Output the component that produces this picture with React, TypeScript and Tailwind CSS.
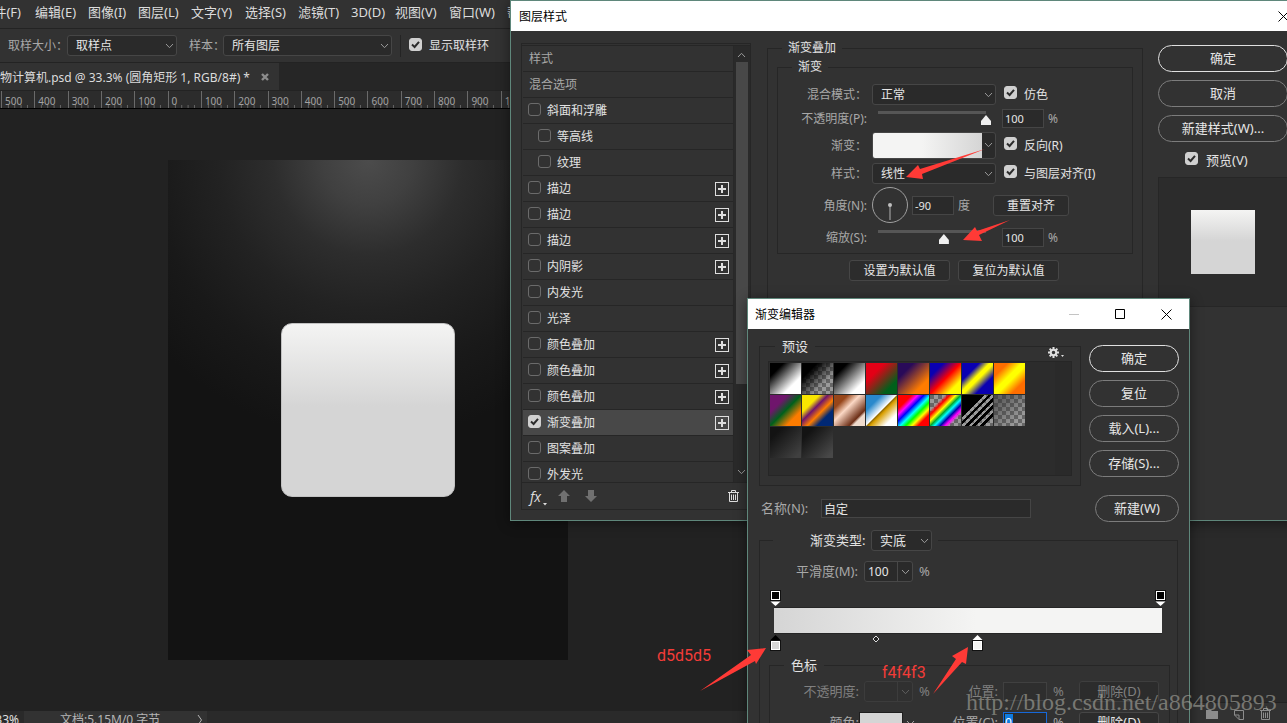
import React, { useId } from "react";

const rulerLabels = ["500", "400", "300", "200", "100", "0", "100", "200", "300", "400", "500", "600", "700", "800", "900", "1000"];

const menuItems: [string, string][] = [
  ["编辑(E)", "w-[53px]"],
  ["图像(I)", "w-[50px]"],
  ["图层(L)", "w-[53px]"],
  ["文字(Y)", "w-[54px]"],
  ["选择(S)", "w-[53px]"],
  ["滤镜(T)", "w-[53px]"],
  ["3D(D)", "w-[44px]"],
  ["视图(V)", "w-[54px]"],
  ["窗口(W)", "w-[58px]"],
  ["帮助(H)", "w-[53px]"],
];

type Effect = { name: string; on?: boolean; sub?: boolean; plus?: boolean };

const effects: Effect[] = [
  { name: "斜面和浮雕" },
  { name: "等高线", sub: true },
  { name: "纹理", sub: true },
  { name: "描边", plus: true },
  { name: "描边", plus: true },
  { name: "描边", plus: true },
  { name: "内阴影", plus: true },
  { name: "内发光" },
  { name: "光泽" },
  { name: "颜色叠加", plus: true },
  { name: "颜色叠加", plus: true },
  { name: "颜色叠加", plus: true },
  { name: "渐变叠加", on: true, plus: true },
  { name: "图案叠加" },
  { name: "外发光" },
];

const presets: [string, string][] = [
  ["前景到背景", "bg-[linear-gradient(135deg,#000_22%,#fff_72%)]"],
  ["前景到透明", "bg-[linear-gradient(135deg,#000_25%,transparent_70%)]"],
  ["黑白", "bg-[linear-gradient(135deg,#000_22%,#fff_78%)]"],
  ["红绿", "bg-[linear-gradient(135deg,#e30016_30%,#00601b_78%)]"],
  ["紫橙", "bg-[linear-gradient(135deg,#290a59_25%,#ff7c00_75%)]"],
  ["蓝红黄", "bg-[linear-gradient(135deg,#0a00b2_22%,#ff0000_50%,#fffc00_78%)]"],
  ["蓝黄蓝", "bg-[linear-gradient(135deg,#0a00b2_28%,#fffc00_45%,#fffc00_52%,#0a00b2_72%)]"],
  ["橙黄橙", "bg-[linear-gradient(135deg,#ff6e00_22%,#ffff00_45%,#ffff00_55%,#ff6e00_78%)]"],
  ["紫绿橙", "bg-[linear-gradient(135deg,#6f156c_28%,#00601b_50%,#fd7c00_76%)]"],
  ["黄紫橙蓝", "bg-[linear-gradient(135deg,#f9e600_28%,#6f156c_42%,#fd7c00_58%,#002874_74%)]"],
  ["铜色", "bg-[linear-gradient(135deg,#97461a_22%,#fbd8c5_42%,#6c2e16_74%,#efdbcd_80%)]"],
  ["铬黄", "bg-[linear-gradient(135deg,#2989cc_25%,#fff_49%,#906a00_51%,#d99f00_56%,#fff_80%)]"],
  ["色谱", "bg-[linear-gradient(135deg,#f00_22%,#f0f_32%,#00f_42%,#0ff_53%,#0f0_62%,#ff0_72%,#f00_82%)]"],
  ["透明彩虹", "bg-[linear-gradient(135deg,transparent_24%,#f00_32%,#ff0_42%,#0a3_50%,#0ff_57%,#00a_66%,#f0f_74%,transparent_82%)]"],
  ["透明条纹", "bg-[linear-gradient(135deg,#000_36%,transparent_36%,transparent_42%,#000_42%,#000_48%,transparent_48%,transparent_54%,#000_54%,#000_60%,transparent_60%,transparent_66%,#000_66%,#000_72%,transparent_72%,transparent_78%,#000_78%,#000_84%,transparent_84%)]"],
  ["中灰密度", "bg-[linear-gradient(135deg,#3338_20%,transparent_80%)]"],
  ["深灰一", "bg-[linear-gradient(135deg,#131313_20%,#404040_90%)]"],
  ["深灰二", "bg-[linear-gradient(135deg,#131313_20%,#484848_90%)]"],
];

function Chevron({ className = "", up = false }: { className?: string; up?: boolean }) {
  return (
    <svg width="9" height="6" viewBox="0 0 9 6" className={className} fill="none" stroke="currentColor" strokeWidth="1" aria-hidden="true">
      {up ? <path d="M1 5 4.5 1.3 8 5" /> : <path d="M1 1 4.5 4.7 8 1" />}
    </svg>
  );
}

function Check({ label, on = false, textClass = "", gap = "gap-[7px]" }: { label: string; on?: boolean; textClass?: string; gap?: string }) {
  return (
    <label className={`flex items-center whitespace-nowrap ${gap}`}>
      <span className="relative -mt-[3px] block size-[13px] shrink-0">
        <input type="checkbox" defaultChecked={on} className="peer block size-[13px] appearance-none rounded-[3px] border border-[#6b6b6b] checked:border-[#d0d0d0] checked:bg-[#d0d0d0]" />
        <svg viewBox="0 0 13 13" className="pointer-events-none absolute inset-0 hidden peer-checked:block" fill="none" stroke="#2b2b2b" strokeWidth="2" aria-hidden="true">
          <path d="M3 6.5 5.6 9 10 3.8" />
        </svg>
      </span>
      <span className={textClass}>{label}</span>
    </label>
  );
}

function Select({ id, value, width, label, pad = "pl-[8px]" }: { id?: string; value: string; width: string; label?: string; pad?: string }) {
  return (
    <span className={`relative block h-[21px] shrink-0 ${width}`}>
      <select id={id} aria-label={label} className={`block h-full w-full appearance-none rounded-[3px] border border-[#464646] bg-[#2a2a2a] text-[#e6e6e6] outline-none ${pad}`}>
        <option>{value}</option>
      </select>
      <Chevron className="pointer-events-none absolute top-[8px] right-[3px] text-[#9a9a9a]" />
    </span>
  );
}

function Combo({ id, value, dim = false }: { id: string; value: string; dim?: boolean }) {
  return (
    <span className={`flex h-[21px] w-[49px] shrink-0 items-center rounded-[3px] border ${dim ? "border-[#3c3c3c] bg-[#303030]" : "border-[#484848] bg-[#2a2a2a]"}`}>
      <input id={id} defaultValue={value} disabled={dim} className="h-full w-[32px] bg-transparent pl-[3px] text-[12px] text-[#e6e6e6] outline-none" />
      <button aria-label="展开" className={`flex h-full flex-1 items-center justify-center border-l ${dim ? "border-[#3c3c3c] text-[#5e5e5e]" : "border-[#484848] text-[#a0a0a0]"}`}>
        <Chevron />
      </button>
    </span>
  );
}

function Field({ id, value, width = "w-[42px]" }: { id: string; value: string; width?: string }) {
  return <input id={id} defaultValue={value} className={`h-[19px] shrink-0 border border-[#454545] bg-[#2a2a2a] pl-[2px] text-[11px] text-[#e6e6e6] outline-none ${width}`} />;
}

function Pill({ children, primary = false, width }: { children: React.ReactNode; primary?: boolean; width: string }) {
  return (
    <button className={`flex h-[27px] items-center justify-center rounded-full text-[13px] text-[#e6e6e6] ${width} ${primary ? "border border-[#e0e0e0]" : "border border-[#7c7c7c]"}`}>
      {children}
    </button>
  );
}

function SmallButton({ children, width, dim = false }: { children: React.ReactNode; width: string; dim?: boolean }) {
  return (
    <button className={`flex h-[21px] shrink-0 items-center justify-center rounded-[3px] border bg-[#2c2c2c] ${width} ${dim ? "border-[#3e3e3e] text-[#808080]" : "border-[#464646] text-[#e6e6e6]"}`}>
      {children}
    </button>
  );
}

function Slider({ id, value }: { id: string; value: number }) {
  return (
    <input
      id={id}
      type="range"
      min={0}
      max={100}
      defaultValue={value}
      className="ml-px h-[14px] w-[118px] shrink-0 appearance-none bg-[linear-gradient(#565656,#565656)] bg-[length:108px_3px] bg-[position:5px_0] bg-no-repeat [&::-webkit-slider-thumb]:mt-[4px] [&::-webkit-slider-thumb]:size-[10px] [&::-webkit-slider-thumb]:appearance-none [&::-webkit-slider-thumb]:bg-[#f0f0f0] [&::-webkit-slider-thumb]:[clip-path:polygon(50%_0,100%_60%,100%_100%,0_100%,0_60%)]"
    />
  );
}

function Row({ label, htmlFor, height, children }: { label: string; htmlFor?: string; height: string; children: React.ReactNode }) {
  return (
    <div className={`flex items-center ${height}`}>
      <label htmlFor={htmlFor} className="mr-[5px] w-[89px] shrink-0 text-right text-[#a8a8a8]">
        {label}
      </label>
      {children}
    </div>
  );
}

function PlusIcon() {
  return (
    <svg width="14" height="14" viewBox="0 0 14 14" fill="none" stroke="#dedede" aria-hidden="true">
      <rect x="0.5" y="0.5" width="13" height="13" />
      <path d="M7 3v8M3 7h8" strokeWidth="2" />
    </svg>
  );
}

function TrashIcon({ className = "" }: { className?: string }) {
  return (
    <svg width="11" height="12" viewBox="0 0 11 12" fill="none" stroke="currentColor" className={className} aria-hidden="true">
      <path d="M0 2.5h11M3.5 2V.5h4V2M1.5 3v8.5h8V3M3.5 4.5v5.5M5.5 4.5v5.5M7.5 4.5v5.5" />
    </svg>
  );
}

function OpacityStop() {
  return (
    <svg width="11" height="17" viewBox="0 0 11 17" aria-hidden="true">
      <rect x="0.5" y="0.5" width="10" height="10" fill="#fff" stroke="#111" />
      <rect x="2" y="2" width="7" height="7" fill="#000" />
      <path d="M0.500 11.500h10L5.500 16z" fill="#fff" />
    </svg>
  );
}

function ColorStop({ color, active = false }: { color: string; active?: boolean }) {
  return (
    <svg width="11" height="17" viewBox="0 0 11 17" aria-hidden="true">
      <path d="M0.500 5h10L5.500 0z" fill={active ? "#000" : "#fff"} />
      <rect x="0.5" y="5.500" width="10" height="10" fill="#fff" stroke="#111" />
      <rect x="2" y="7" width="7" height="7" fill={color} />
    </svg>
  );
}

function Workspace() {
  return (
    <div className="flex h-full flex-col">
      <nav className="flex h-[29px] shrink-0 items-center border-b border-[#232323] pb-[3px] text-[13px] whitespace-nowrap text-[#dcdcdc]">
        <div className="flex w-[35px] shrink-0 justify-end pr-[14px]">
          <button className="shrink-0">文件(F)</button>
        </div>
        {menuItems.map(([name, width]) => (
          <button key={name} className={`shrink-0 text-left ${width}`}>
            {name}
          </button>
        ))}
      </nav>
      <div className="flex h-[34px] shrink-0 items-center border-b border-[#232323] pl-[8px] text-[12px] whitespace-nowrap">
        <label htmlFor="sample-size" className="w-[59px] text-[#a8a8a8]">取样大小：</label>
        <Select id="sample-size" value="取样点" width="w-[110px]" />
        <label htmlFor="sample" className="ml-[12px] w-[34px] text-[#a8a8a8]">样本：</label>
        <Select id="sample" value="所有图层" width="w-[169px]" />
        <span className="mx-[8px] h-[22px] border-l border-[#242424]" />
        <Check label="显示取样环" on textClass="text-[#e0e0e0]" />
      </div>
      <div className="flex h-[28px] shrink-0 border-b border-[#232323] bg-[#262626]">
        <div className="flex w-[279px] items-center gap-[6px] bg-[#323232] pt-px text-[12px] whitespace-nowrap text-[#dcdcdc]">
          <span className="w-[255px]">物计算机.psd @ 33.3% (圆角矩形 1, RGB/8#) *</span>
          <button aria-label="关闭" className="text-[#8c8c8c]">
            <svg width="8" height="8" viewBox="0 0 8 8" stroke="currentColor" strokeWidth="2.400" aria-hidden="true"><path d="M1 1l6 6M7 1l-6 6" /></svg>
          </button>
        </div>
      </div>
      <div className="flex h-[18px] shrink-0 border-b border-black bg-[#2c2c2c] pl-px">
        <div className="grid w-[533px] shrink-0 grid-cols-16">
          {rulerLabels.map((text, i) => (
            <div key={i} className="relative overflow-hidden border-l border-[#6a6a6a] pt-[3px] pl-[3px] text-[10px] leading-[14px] text-[#a2a2a2]">
              {text}
              <svg className="absolute bottom-0 left-0 h-[4px] w-full" viewBox="0 0 33 4" preserveAspectRatio="none" stroke="#666" aria-hidden="true">
                <path d="M6.500 1v3M13 1v3M19.500 1v3M26 1v3" />
              </svg>
            </div>
          ))}
        </div>
      </div>
      <div className="flex min-h-0 flex-1">
        <main className="flex min-w-0 flex-1 flex-col">
          <div className="min-h-0 flex-1 overflow-hidden bg-[#222222] pt-[51px] pl-[168px]">
            <div className="flex h-[500px] w-[400px] items-start justify-start bg-[#131313] bg-[radial-gradient(circle_at_50%_0,#4c4c4c_0,#404040_45px,#2d2d2d_95px,#222222_150px,#191919_215px,#131313_280px)] pt-[163px] pl-[113px]">
              <div className="size-[174px] rounded-[11px] border border-[#c2c2c2] bg-[linear-gradient(#f4f4f3,#d5d5d5_48%)]" />
            </div>
          </div>
          <footer className="flex h-[12px] shrink-0 items-start overflow-hidden bg-[#2a2a2a] text-[12px] leading-[17px] whitespace-nowrap">
            <span className="flex w-[24px] justify-end pr-[5px] text-[#e0e0e0]">
              <span>33.33%</span>
            </span>
            <span className="flex w-[183px] justify-between bg-[#323232] pr-[4px] pl-[36px] text-[#b4b4b4]">
              <span>文档:5.15M/0 字节</span>
              <svg width="6" height="12" viewBox="0 0 6 12" className="mt-[3px]" fill="none" stroke="currentColor" aria-hidden="true"><path d="M1 1l3.500 5L1 11" /></svg>
            </span>
          </footer>
        </main>
        <aside className="flex w-[150px] flex-col justify-end bg-[#2a2a2a]">
          <div className="flex h-[21px] items-end justify-end gap-[16px] border-t border-[#222] bg-[#323232] pr-[16px] pb-[3px] text-[#8c8c8c]">
            <svg width="12" height="10" viewBox="0 0 12 10" fill="currentColor" aria-hidden="true"><path d="M0 0h5l1 1h6v8H0z" /></svg>
            <svg width="10" height="10" viewBox="0 0 10 10" fill="none" stroke="currentColor" aria-hidden="true"><path d="M.5 5V.5h9v9H5M.5 5h4.500v4.500z" /></svg>
            <TrashIcon />
          </div>
        </aside>
      </div>
    </div>
  );
}

function EffectList() {
  return (
    <section className="mt-[12px] flex h-[467px] w-[230px] shrink-0 flex-col border border-[#262626] text-[12px] text-[#e2e2e2]">
      <div className="mt-px flex min-h-0 flex-1 border-t border-[#262626]">
        <div className="min-w-0 flex-1 overflow-hidden pl-px">
          <button className="flex h-[26px] w-full items-center border-b border-[#262626] pl-[6px] text-[#a8a8a8]">样式</button>
          <button className="flex h-[26px] w-full items-center border-b border-[#262626] pl-[6px] text-[#a8a8a8]">混合选项</button>
          {effects.map((e, i) => (
            <div key={i} className={`flex h-[26px] items-center justify-between border-b border-[#262626] pr-[4px] ${e.sub ? "pl-[15px]" : "pl-[5px]"} ${e.on ? "bg-[#484848]" : ""}`}>
              <Check label={e.name} on={e.on} gap="gap-[6px]" />
              {e.plus && <button aria-label={`添加${e.name}`}><PlusIcon /></button>}
            </div>
          ))}
        </div>
        <div className="flex w-[17px] flex-col items-center border-l border-[#282828] bg-[#2a2a2a] pr-px text-[#9a9a9a]">
          <Chevron up className="mt-[6px] mb-[4px]" />
          <div className="h-[322px] w-[12px] bg-[#484848]" />
          <Chevron className="mt-auto mb-[7px]" />
        </div>
      </div>
      <div className="flex h-[27px] shrink-0 items-center border-t border-[#262626] px-[8px] text-[#707070]">
        <button className="flex w-[28px] items-center font-['Open_Sans'] text-[14px] text-[#dedede] italic">
          fx
          <svg width="4" height="3" viewBox="0 0 4 3" className="mt-[17px] ml-[2px]" fill="currentColor" aria-hidden="true"><path d="M0 0h4L2 2.500z" /></svg>
        </button>
        <button aria-label="上移" className="w-[27px]">
          <svg width="12" height="12" viewBox="0 0 12 12" fill="currentColor" aria-hidden="true"><path d="M6 0l6 6H9v6H3V6H0z" /></svg>
        </button>
        <button aria-label="下移">
          <svg width="12" height="12" viewBox="0 0 12 12" fill="currentColor" aria-hidden="true"><path d="M6 12l6-6H9V0H3v6H0z" /></svg>
        </button>
        <button aria-label="删除效果" className="mr-[3px] ml-auto text-[#dedede]"><TrashIcon /></button>
      </div>
    </section>
  );
}

function LayerStyleDialog() {
  return (
    <section className="absolute top-0 left-[510px] flex h-[521px] w-[790px] flex-col border border-[#5f877b] bg-[#323232] text-[12px] whitespace-nowrap text-[#e2e2e2] shadow-[0_2px_12px_rgba(0,0,0,0.45)]">
      <header className="flex h-[30px] shrink-0 items-center justify-between bg-white pr-[10px] pl-[8px] text-black">
        <h2>图层样式</h2>
        <button aria-label="关闭">
          <svg width="11" height="11" viewBox="0 0 11 11" stroke="currentColor" aria-hidden="true"><path d="M.5.5l10 10M10.500.5l-10 10" /></svg>
        </button>
      </header>
      <div className="flex min-h-0 flex-1 pl-[10px]">
        <EffectList />
        <fieldset className="mt-[9px] mb-[11px] ml-[16px] w-[376px] shrink-0 border border-[#262626] px-[9px]">
          <legend className="ml-[5px] px-[6px] leading-[16px]">渐变叠加</legend>
          <fieldset className="mt-[3px] border border-[#262626] pt-[7px] pb-[3px]">
            <legend className="ml-[14px] px-[6px] leading-[16px]">渐变</legend>
            <Row label="混合模式：" htmlFor="blend" height="h-[24px]">
              <Select id="blend" value="正常" width="w-[124px]" />
              <span className="ml-[8px]"><Check label="仿色" on /></span>
            </Row>
            <Row label="不透明度(P):" htmlFor="opacity" height="h-[24px]">
              <Slider id="opacity" value={100} />
              <span className="ml-[11px] flex items-center gap-[4px]"><Field id="opacity-value" value="100" /><label htmlFor="opacity-value" className="text-[#a8a8a8]">%</label></span>
            </Row>
            <Row label="渐变：" htmlFor="gradient" height="h-[30px]">
              <span className="flex h-[27px] w-[124px] shrink-0 rounded-[3px] border border-[#464646] bg-[#2a2a2a]">
                <button id="gradient" aria-label="渐变" className="w-[109px] rounded-l-[2px] bg-[linear-gradient(90deg,#f4f4f3_45%,#d5d5d5)]" />
                <button aria-label="选择渐变" className="flex flex-1 items-center justify-center text-[#9a9a9a]"><Chevron /></button>
              </span>
              <span className="ml-[8px]"><Check label="反向(R)" on /></span>
            </Row>
            <Row label="样式：" htmlFor="style" height="h-[26px]">
              <Select id="style" value="线性" width="w-[124px]" />
              <span className="ml-[8px]"><Check label="与图层对齐(I)" on /></span>
            </Row>
            <Row label="角度(N):" htmlFor="angle" height="h-[38px]">
              <svg width="36" height="36" viewBox="0 0 36 36" className="shrink-0" fill="none" stroke="#a0a0a0" aria-hidden="true">
                <circle cx="18" cy="18" r="17.500" />
                <path d="M18 18v15" strokeWidth="1.500" stroke="#888" />
                <circle cx="18" cy="18" r="2" fill="#c0c0c0" stroke="none" />
              </svg>
              <span className="ml-[4px] flex items-center gap-[4px]"><Field id="angle" value="-90" /><span className="text-[#a8a8a8]">度</span></span>
              <span className="ml-[23px]"><SmallButton width="w-[76px]">重置对齐</SmallButton></span>
            </Row>
            <Row label="缩放(S):" htmlFor="scale" height="h-[26px]">
              <Slider id="scale" value={61} />
              <span className="ml-[11px] flex items-center gap-[4px]"><Field id="scale-value" value="100" /><label htmlFor="scale-value" className="text-[#a8a8a8]">%</label></span>
            </Row>
          </fieldset>
          <div className="mt-[6px] flex gap-[8px] pl-[72px]">
            <SmallButton width="w-[101px]">设置为默认值</SmallButton>
            <SmallButton width="w-[101px]">复位为默认值</SmallButton>
          </div>
        </fieldset>
        <div className="mt-[14px] ml-[15px] flex w-[130px] shrink-0 flex-col gap-[8px]">
          <Pill primary width="w-full">确定</Pill>
          <Pill width="w-full">取消</Pill>
          <Pill width="w-full">新建样式(W)...</Pill>
          <div className="flex h-[20px] items-center pl-[27px] text-[13px]"><Check label="预览(V)" on gap="gap-[8px]" /></div>
          <div className="-mt-px flex h-[130px] items-center justify-center border border-[#262626] bg-[#2c2c2c]">
            <div className="size-[64px] bg-[linear-gradient(#f4f4f3,#d5d5d5_48%)]" />
          </div>
        </div>
      </div>
    </section>
  );
}

function GradientEditorDialog() {
  const nameId = useId();
  return (
    <section className="absolute top-[298px] left-[747px] flex w-[443px] flex-col border border-[#5f877b] bg-[#323232] pb-[30px] text-[13px] whitespace-nowrap text-[#e2e2e2] shadow-[0_2px_12px_rgba(0,0,0,0.45)]">
      <header className="flex h-[30px] items-center justify-between bg-white pr-[17px] pl-[7px] text-black">
        <h2 className="text-[12px]">渐变编辑器</h2>
        <div className="flex gap-[35px]">
          <button aria-label="最小化" className="text-[#c4c4c4]"><svg width="11" height="11" viewBox="0 0 11 11" stroke="currentColor" aria-hidden="true"><path d="M0 5.500h10" /></svg></button>
          <button aria-label="最大化"><svg width="11" height="11" viewBox="0 0 11 11" fill="none" stroke="currentColor" aria-hidden="true"><path d="M.5.5h9v9h-9z" /></svg></button>
          <button aria-label="关闭"><svg width="11" height="11" viewBox="0 0 11 11" stroke="currentColor" aria-hidden="true"><path d="M.5.5l10 10M10.500.5l-10 10" /></svg></button>
        </div>
      </header>
      <div className="flex pt-[8px] pl-[11px]">
        <fieldset className="relative h-[149px] w-[322px] border border-[#262626] px-[8px]">
          <legend className="ml-[7px] px-[7px] leading-[18px]">预设</legend>
          <button aria-label="预设选项" className="absolute -top-[8px] right-[14px] flex items-center gap-[2px] bg-[#323232] px-[2px] text-[#dedede]">
            <svg width="11" height="11" viewBox="0 0 12 12" aria-hidden="true">
              <circle cx="6" cy="6" r="3" fill="none" stroke="currentColor" strokeWidth="2.200" />
              <path d="M6 0v2.500M6 9.500V12M0 6h2.500M9.500 6H12M1.800 1.800l1.700 1.700M8.500 8.500l1.700 1.700M10.200 1.800 8.500 3.500M3.500 8.500l-1.700 1.700" stroke="currentColor" strokeWidth="2.200" />
            </svg>
            <svg width="3" height="2" viewBox="0 0 3 2" className="mt-[6px]" fill="currentColor" aria-hidden="true"><path d="M0 0h3L1.500 2z" /></svg>
          </button>
          <div className="mt-[6px] flex h-[115px] border border-[#262626] bg-[#2c2c2c]">
            <div className="grid grid-cols-8 content-start gap-px p-px">
              {presets.map(([name, fill]) => (
                <button key={name} aria-label={name} className="size-[31px] bg-[repeating-conic-gradient(#9a9a9a_0_25%,#666_0_50%)] bg-[length:8px_8px]">
                  <span className={`block size-full ${fill}`} />
                </button>
              ))}
            </div>
            <div className="ml-auto w-[16px] bg-[#2a2a2a]" />
          </div>
        </fieldset>
        <div className="mt-[8px] ml-[8px] flex flex-col gap-[8px]">
          <Pill primary width="w-[90px]">确定</Pill>
          <Pill width="w-[90px]">复位</Pill>
          <Pill width="w-[90px]">载入(L)...</Pill>
          <Pill width="w-[90px]">存储(S)...</Pill>
        </div>
      </div>
      <div className="mt-[9px] flex items-center pr-[10px] pl-[13px]">
        <label htmlFor={nameId} className="w-[60px] text-[#a8a8a8]">名称(N):</label>
        <input id={nameId} defaultValue="自定" className="h-[19px] w-[210px] border border-[#454545] bg-[#2a2a2a] pl-[2px] text-[12px] text-[#e6e6e6] outline-none" />
        <span className="ml-auto"><Pill width="w-[84px]">新建(W)</Pill></span>
      </div>
      <fieldset className="mx-[11px] mt-[8px] border border-[#262626] px-[9px]">
        <legend className="ml-[4px] flex items-center pr-[6px] pl-[37px]">
          <label htmlFor="gradient-type" className="w-[61px]">渐变类型:</label>
          <Select id="gradient-type" value="实底" width="w-[61px]" />
        </legend>
        <div className="mt-[10px] flex items-center">
          <label htmlFor="smoothness" className="mr-[6px] w-[89px] text-right text-[#a8a8a8]">平滑度(M):</label>
          <Combo id="smoothness" value="100" />
          <span className="ml-[6px] text-[#a8a8a8]">%</span>
        </div>
        <div className="mt-[8px] flex justify-between pr-[2px] pl-px">
          <OpacityStop />
          <OpacityStop />
        </div>
        <div className="mr-[6px] ml-[5px] h-[27px] border-y border-[#262626] bg-[linear-gradient(90deg,#d5d5d5,#f4f4f3_52%)]" />
        <div className="flex items-start pt-px pl-px">
          <ColorStop color="#d5d5d5" active />
          <svg width="8" height="8" viewBox="0 0 8 8" className="ml-[91px]" fill="#222" stroke="#ddd" aria-hidden="true"><path d="M4 1l3 3-3 3-3-3z" /></svg>
          <span className="ml-[92px]"><ColorStop color="#f4f4f3" /></span>
        </div>
        <fieldset className="mt-[4px] mr-[-2px] border border-[#262626] pt-[6px]">
          <legend className="ml-[14px] px-[7px] leading-[19px]">色标</legend>
          <div className="flex items-center text-[#808080]">
            <label htmlFor="stop-opacity" className="mr-[5px] w-[89px] text-right">不透明度:</label>
            <Combo id="stop-opacity" value="" dim />
            <span className="ml-[6px]">%</span>
            <label htmlFor="stop-pos" className="mr-[5px] ml-auto">位置:</label>
            <input id="stop-pos" disabled className="h-[19px] w-[44px] border border-[#404040] bg-[#2e2e2e]" />
            <span className="ml-[6px] w-[26px]">%</span>
            <span className="mr-[10px]"><SmallButton width="w-[80px]" dim>删除(D)</SmallButton></span>
          </div>
          <div className="mt-[10px] flex items-center text-[#a8a8a8]">
            <label htmlFor="stop-color" className="w-[89px] text-right">颜色:</label>
            <button id="stop-color" aria-label="颜色" className="h-[21px] w-[44px] border border-[#1e1e1e] bg-[#d5d5d5]" />
            <Chevron className="ml-[3px]" />
            <label htmlFor="color-pos" className="mr-[5px] ml-auto">位置(C):</label>
            <div className="flex h-[21px] w-[44px] items-center border border-[#1668d8] bg-[#2a2a2a] pl-px">
              <input id="color-pos" defaultValue="0" className="h-[17px] w-[8px] bg-[#0f7be0] text-[12px] text-white outline-none" />
            </div>
            <span className="ml-[6px] w-[26px]">%</span>
            <span className="mr-[10px]"><SmallButton width="w-[80px]">删除(D)</SmallButton></span>
          </div>
        </fieldset>
      </fieldset>
    </section>
  );
}

function Annotations() {
  return (
    <div className="pointer-events-none absolute inset-0 overflow-hidden">
      <svg className="absolute inset-0 h-full w-full" fill="#ff3a36" aria-hidden="true">
        <path d="M906 177l12-12 2 4 65-20-63 25 1 5z" />
        <path d="M963 240l12-13 2 4 33-11-31 15 3 6z" />
        <path d="M766 648l-19 2 4 5-51 36 55-30 1 3z" />
        <path d="M968 647l-16 9 4 3-23 35 29-32 4 2z" />
      </svg>
      <p className="absolute top-[644px] left-[657px] font-['Roboto',sans-serif] text-[16px] leading-[24px] text-[#f23c38]">d5d5d5</p>
      <p className="absolute top-[661px] left-[882px] font-['Roboto',sans-serif] text-[16px] leading-[24px] text-[#f23c38]">f4f4f3</p>
      <p className="absolute top-[688px] left-[966px] font-['Liberation_Serif',serif] text-[24px] leading-[28px] whitespace-nowrap text-[#a9a9a0]/60">http://blog.csdn.net/a864805893</p>
    </div>
  );
}

export default function App() {
  return (
    <div className="relative h-screen overflow-hidden bg-[#323232] font-['Noto_Sans','Noto_Sans_CJK_SC',sans-serif] leading-[17px]">
      <Workspace />
      <LayerStyleDialog />
      <GradientEditorDialog />
      <Annotations />
    </div>
  );
}
